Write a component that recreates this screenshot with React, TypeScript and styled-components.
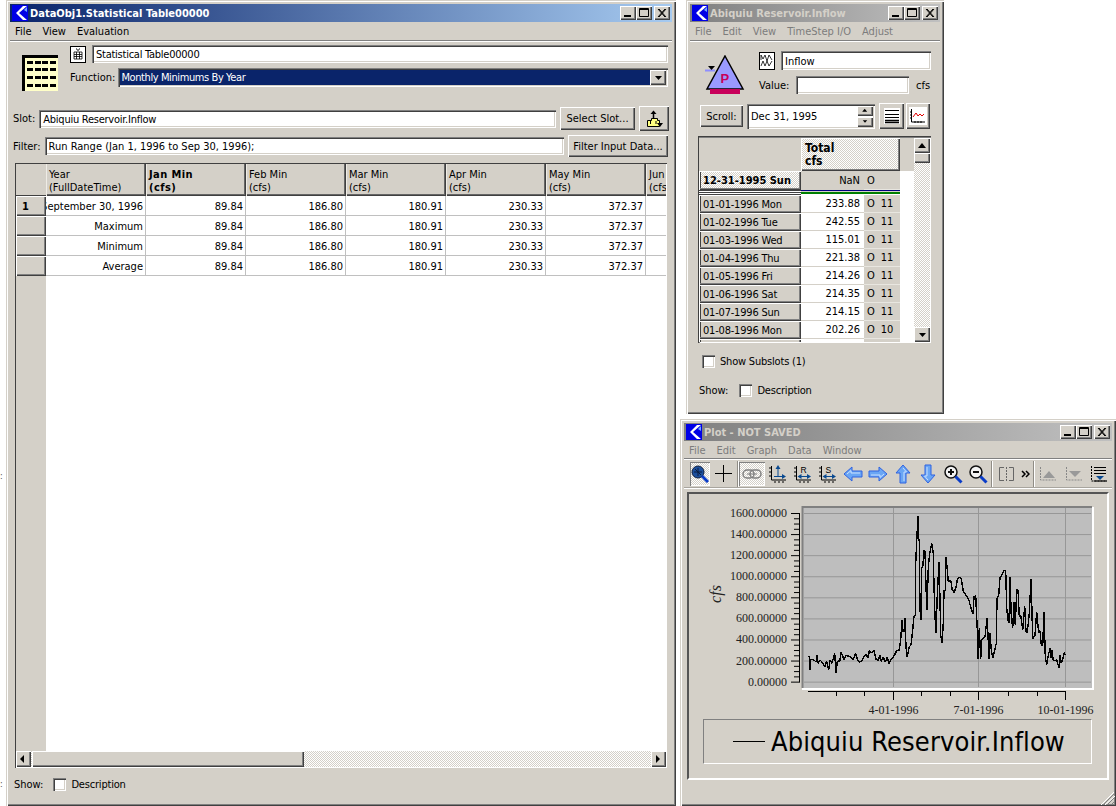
import React from 'react';
import styled, {createGlobalStyle, css} from 'styled-components';

const GlobalStyle = createGlobalStyle`
  html, body {
    margin: 0;
    padding: 0;
    background: #fff;
    width: 1116px;
    height: 806px;
    overflow: hidden;
  }
  body {
    font-family: "DejaVu Sans Condensed", "DejaVu Sans", sans-serif;
    font-size: 11px;
    color: #000;
  }
`

const face = '#d4d0c8'
const raised = css`
  background-color: ${face};
  box-shadow: inset 1px 1px #fff, inset -1px -1px #404040, inset -2px -2px #808080;
`
const sunken = css`
  background-color: #fff;
  box-shadow: inset 1px 1px #808080, inset 2px 2px #404040, inset -1px -1px #fff, inset -2px -2px ${face};
`
const dither = css`
  background: repeating-conic-gradient(${face} 0 25%, #fff 0 50%) 0 0 / 2px 2px;
`

const Desktop = styled.div`
  position: relative;
  width: 1116px;
  height: 806px;
  overflow: hidden;
`
const Stray = styled.span<{$y: number}>`
  position: absolute;
  left: 0;
  top: ${p => p.$y}px;
  line-height: 10px;
  font-size: 9px;
  color: #554;
`
const Win = styled.section<{$x: number; $y: number; $w: number; $h: number}>`
  position: absolute;
  left: ${p => p.$x}px;
  top: ${p => p.$y}px;
  width: ${p => p.$w}px;
  height: ${p => p.$h}px;
  box-sizing: border-box;
  padding: 4px;
  display: flex;
  flex-direction: column;
  background: ${face};
  box-shadow: inset 1px 1px ${face}, inset 2px 2px #fff, inset -1px -1px #404040, inset -2px -2px #808080;
`
const TitleBar = styled.header<{$active?: boolean}>`
  flex: none;
  height: 18px;
  display: flex;
  align-items: center;
  padding: 0 2px 0 2px;
  font-weight: bold;
  font-size: 11px;
  color: ${p => (p.$active ? '#fff' : face)};
  background: ${p => (p.$active ? 'linear-gradient(90deg, #0a246a, #a6caf0)' : 'linear-gradient(90deg, #808080, #c0c0c0)')};
`
const TitleText = styled.span`
  flex: 1;
  margin-left: 2px;
  white-space: nowrap;
`
const WinButtons = styled.div`
  display: flex;
`
const WinButton = styled.button`
  ${raised};
  width: 16px;
  height: 14px;
  border: 0;
  padding: 0;
  margin: 0;
  display: block;
  &:last-child {
    margin-left: 2px;
  }
  svg {
    display: block;
  }
`
const MenuBar = styled.nav<{$dim?: boolean; $short?: boolean}>`
  flex: none;
  height: ${p => (p.$short ? 15 : 17)}px;
  padding: ${p => (p.$short ? 2 : 1)}px 0 0 5px;
  display: flex;
  align-items: center;
  gap: 11px;
  color: ${p => (p.$dim ? '#7c7c7c' : '#000')};
  border-bottom: 1px solid #808080;
  box-shadow: 0 1px #fff;
  margin-bottom: ${p => (p.$short ? 1 : 2)}px;
  font-size: 11px;
`
const TextBox = styled.div<{$w?: number; $h?: number; $tight?: boolean}>`
  ${sunken};
  box-sizing: border-box;
  ${p => (p.$w ? `width: ${p.$w}px; flex: none;` : 'flex: 1;')}
  height: ${p => p.$h ?? 18}px;
  display: flex;
  align-items: center;
  padding: 1px 0 0 4px;
  white-space: nowrap;
  overflow: hidden;
  letter-spacing: ${p => (p.$tight ? '-0.25px' : 'normal')};
`
const PushButton = styled.button<{$w: number; $h: number}>`
  ${raised};
  border: 0;
  padding: 0;
  flex: none;
  width: ${p => p.$w}px;
  height: ${p => p.$h}px;
  font: inherit;
  color: #000;
  display: flex;
  align-items: center;
  justify-content: center;
`
const Check = styled.span`
  ${sunken};
  flex: none;
  display: block;
  width: 13px;
  height: 13px;
`
const Caption = styled.span`
  white-space: nowrap;
`

/* statistical table window */
const HeadRow = styled.div`
  display: flex;
  padding: 2px 4px 0 12px;
`
const BigIconBox = styled.div`
  flex: none;
  margin: 10px 12px 0 0;
  width: 36px;
  height: 36px;
`
const HeadCol = styled.div`
  flex: 1;
  display: flex;
  flex-direction: column;
  gap: 5px;
`
const NameRow = styled.div`
  display: flex;
  align-items: center;
  gap: 6px;
`
const FuncRow = styled.div`
  display: flex;
  align-items: center;
  gap: 3px;
`
const SelectBox = styled.div`
  ${sunken};
  flex: 1;
  height: 19px;
  box-sizing: border-box;
  padding: 2px;
  display: flex;
  align-items: stretch;
`
const SelectValue = styled.div`
  flex: 1;
  background: #0a246a;
  color: #fff;
  display: flex;
  align-items: center;
  padding-left: 1px;
  letter-spacing: -0.4px;
`
const SelectArrow = styled.div`
  ${raised};
  flex: none;
  width: 16px;
  display: flex;
  align-items: center;
  justify-content: center;
`
const FieldRow = styled.div<{$top: number; $right: number; $h: number}>`
  display: flex;
  align-items: center;
  height: ${p => p.$h}px;
  margin-top: ${p => p.$top}px;
  padding: 0 ${p => p.$right}px 0 3px;
  gap: 4px;
`
const TableFrame = styled.div`
  flex: 1;
  min-height: 0;
  margin: 6px 5px 0;
  box-sizing: border-box;
  padding: 1px;
  display: flex;
  flex-direction: column;
  background: #fff;
  box-shadow: inset 1px 1px #404040, inset -1px -1px #fff;
`
const TableBody = styled.div`
  flex: 1;
  min-height: 0;
  display: flex;
`
const RowHeads = styled.div`
  flex: none;
  width: 30px;
  background: ${face};
  display: flex;
  flex-direction: column;
`
const Corner = styled.div`
  height: 31px;
  border-bottom: 1px solid #404040;
`
const RowHead = styled.div`
  ${raised};
  height: 20px;
  box-sizing: border-box;
  padding-left: 6px;
  display: flex;
  align-items: center;
  font-weight: bold;
`
const Cells = styled.div`
  flex: 1;
  overflow: hidden;
  display: grid;
  grid-template-columns: repeat(7, 100px);
  grid-template-rows: 32px;
  grid-auto-rows: 20px;
  align-content: start;
`
const HeadCell = styled.div<{$bold?: boolean}>`
  background: ${face};
  box-shadow: inset 1px 0 #efece6, inset -1px -1px #404040, inset -2px -2px #666;
  box-sizing: border-box;
  padding: 4px 0 0 3px;
  line-height: 13px;
  white-space: pre;
  overflow: hidden;
  font-weight: ${p => (p.$bold ? 'bold' : 'normal')};
  letter-spacing: ${p => (p.$bold ? '0.4px' : 'normal')};
`
const DataCell = styled.div`
  box-sizing: border-box;
  border-right: 1px solid #c0c0c0;
  border-bottom: 1px solid #c0c0c0;
  padding: 2px 2px 0 0;
  display: flex;
  justify-content: flex-end;
  align-items: center;
  white-space: nowrap;
  overflow: hidden;
  background: #fff;
`
const HScroll = styled.div`
  ${dither};
  flex: none;
  height: 16px;
  display: flex;
  align-items: stretch;
  justify-content: space-between;
`
const ScrollBtn = styled.div`
  ${raised};
  flex: none;
  width: 15px;
  display: flex;
  align-items: center;
  justify-content: center;
`
const HThumb = styled.div`
  ${raised};
  flex: none;
  width: 272px;
  margin-left: 1px;
`
const HScrollLeft = styled.div`
  display: flex;
  align-items: stretch;
`
const ShowRow = styled.div<{$h: number; $left: number; $bottom?: number}>`
  flex: none;
  height: ${p => p.$h}px;
  display: flex;
  align-items: center;
  padding-left: ${p => p.$left}px;
  padding-bottom: ${p => p.$bottom ?? 0}px;
`
const ShowLabel = styled(Caption)<{$gap: number}>`
  margin-right: ${p => p.$gap}px;
`
const CheckText = styled(Caption)`
  margin-left: 5px;
  letter-spacing: -0.2px;
`

/* slot window */
const SlotHead = styled.div`
  display: flex;
  padding: 8px 9px 0 15px;
  height: 46px;
`
const ReservoirBox = styled.div`
  flex: none;
  margin-top: 4px;
  height: 40px;
`
const SlotFields = styled.div`
  flex: 1;
  margin-left: 14px;
  display: flex;
  flex-direction: column;
  gap: 6px;
`
const ValueRow = styled.div`
  display: flex;
  align-items: center;
`
const ValueLabel = styled(Caption)`
  width: 37px;
  flex: none;
`
const Unit = styled(Caption)`
  margin-left: 7px;
`
const ScrollRow = styled.div`
  display: flex;
  align-items: center;
  margin-top: 6px;
  padding-left: 10px;
  height: 26px;
`
const DateBox = styled.div`
  ${sunken};
  box-sizing: border-box;
  width: 128px;
  height: 25px;
  margin-left: 4px;
  display: flex;
  align-items: center;
  justify-content: space-between;
  padding: 0 2px 0 4px;
`
const Spin = styled.div`
  display: flex;
  flex-direction: column;
  gap: 1px;
`
const SpinBtn = styled.div`
  ${raised};
  width: 16px;
  height: 10px;
  display: flex;
  align-items: center;
  justify-content: center;
  svg {
    width: 6px;
    height: 5px;
  }
`
const ToolPair = styled.div`
  display: flex;
  gap: 2px;
  margin-left: 4px;
`
const SlotFrame = styled.div`
  flex: none;
  height: 207px;
  margin: 7px 9px 0 8px;
  box-sizing: border-box;
  padding: 2px 1px 1px 1px;
  display: flex;
  box-shadow: inset 1px 1px #404040, inset 2px 2px #808080, inset -1px -1px #fff;
  background: ${face};
`
const SlotGrid = styled.div`
  flex: 1;
  overflow: hidden;
  display: grid;
  grid-template-columns: 102px 63px 36px 14px;
  grid-template-rows: 33px 19px 5px;
  grid-auto-rows: 18px;
  align-content: start;
`
const BlankHead = styled.div`
  background: ${face};
`
const TotalHead = styled.div`
  ${dither};
  grid-column: span 2;
  box-shadow: inset 1px 1px #fff, inset -1px -1px #404040, inset -2px -2px #808080;
  box-sizing: border-box;
  padding: 4px 0 0 4px;
  line-height: 13px;
  font-weight: bold;
  font-size: 12px;
  white-space: pre;
`
const DateHead = styled.div<{$bold?: boolean}>`
  ${p => (p.$bold ? dither : `background: ${face};`)}
  box-shadow: inset 1px 1px #fff, inset -1px -1px #404040, inset -2px -2px #808080, inset 2px 0 #404040;
  box-sizing: border-box;
  padding-left: 4px;
  display: flex;
  align-items: center;
  font-weight: ${p => (p.$bold ? 'bold' : 'normal')};
  letter-spacing: ${p => (p.$bold ? 'normal' : '-0.2px')};
  white-space: nowrap;
`
const ValueCell = styled.div<{$nan?: boolean}>`
  background: ${p => (p.$nan ? face : '#fff')};
  border-bottom: 1px solid ${p => (p.$nan ? face : '#d4d0c8')};
  box-sizing: border-box;
  padding-right: 4px;
  display: flex;
  align-items: center;
  justify-content: flex-end;
`
const FlagCell = styled.div`
  background: ${face};
  border-bottom: 1px solid #e8e6e0;
  box-sizing: border-box;
  display: flex;
  align-items: center;
  gap: 6px;
  padding-left: 3px;
`
const Gutter = styled.div`
  background: #fff;
`
const GutterHead = styled.div`
  background: ${face};
`
const DividerLeft = styled.div`
  background: linear-gradient(#404040 0 1px, #fff 1px 2px, #404040 2px 3px, #fff 3px 4px, #404040 4px 5px);
`
const DividerRight = styled.div`
  background: linear-gradient(#00007f 0 1px, ${face} 1px 2px, #007f00 2px 4px, #fff 4px 5px);
`
const VScroll = styled.div`
  ${dither};
  flex: none;
  width: 16px;
  display: flex;
  flex-direction: column;
`
const VBtn = styled.div`
  ${raised};
  flex: none;
  height: 15px;
  display: flex;
  align-items: center;
  justify-content: center;
`
const VThumb = styled.div`
  ${raised};
  flex: none;
  height: 10px;
`
const VSpace = styled.div`
  flex: 1;
`

/* plot window */
const ToolBar = styled.div`
  flex: none;
  height: 27px;
  display: flex;
  align-items: center;
  padding-left: 6px;
  border-bottom: 1px solid #a8a59e;
  box-shadow: 0 1px #fff;
`
const Tool = styled.div<{$w: number; $on?: boolean}>`
  flex: none;
  width: ${p => p.$w}px;
  height: 24px;
  display: flex;
  align-items: center;
  justify-content: center;
  ${p =>
    p.$on
      ? css`
          ${dither};
          box-shadow: inset 1px 1px #808080, inset -1px -1px #fff;
        `
      : ''}
`
const ToolSep = styled.div`
  flex: none;
  width: 1px;
  height: 26px;
  margin: 0 1px;
  background: #8f8c85;
  box-shadow: 1px 0 #fff;
`
const PlotFrame = styled.div`
  flex: none;
  width: 422px;
  height: 288px;
  margin: 4px 0 0 3px;
  box-sizing: border-box;
  border: 2px solid;
  border-color: #555 #fff #fff #555;
  display: flex;
  flex-direction: column;
  svg {
    display: block;
    flex: none;
  }
`
const Legend = styled.div`
  flex: none;
  width: 389px;
  height: 45px;
  margin-left: 14px;
  box-sizing: border-box;
  border: 1px solid;
  border-color: #808080 #fff #fff #808080;
  display: flex;
  align-items: center;
  padding-left: 29px;
  gap: 6px;
`
const LegendLine = styled.span`
  flex: none;
  width: 32px;
  height: 1px;
  background: #000;
`
const LegendText = styled.span`
  font-size: 27px;
  letter-spacing: 0.1px;
  white-space: nowrap;
  color: #000;
`
const Grip = styled.svg`
  position: absolute;
  right: 1px;
  bottom: 1px;
`

const RiverIcon = () => (
  <svg width="16" height="16" viewBox="0 0 16 16">
    <rect width="16" height="16" fill="#0000e6" />
    <path d="M11 1h4L7 8l8 7h-4L4 8z" fill="#fff" />
    <path d="M12 5l3-3v5z" fill="#6fa8ff" />
  </svg>
)
const MinGlyph = () => (
  <svg width="16" height="14"><rect x="4" y="9" width="7" height="2" fill="#000" /></svg>
)
const MaxGlyph = () => (
  <svg width="16" height="14"><path d="M3.5 2.5h9v8h-9zM3 3.5h10" fill="none" stroke="#000" /></svg>
)
const CloseGlyph = () => (
  <svg width="16" height="14"><path d="M4 3l7 8M5 3l7 8M11 3l-7 8M12 3l-7 8" stroke="#000" /></svg>
)
const WinControls = () => (
  <WinButtons>
    <WinButton><MinGlyph /></WinButton>
    <WinButton><MaxGlyph /></WinButton>
    <WinButton><CloseGlyph /></WinButton>
  </WinButtons>
)
const Tri = ({dir}: {dir: 'up' | 'down' | 'left' | 'right'}) => {
  const points = {up: '0,6 8,6 4,1', down: '1,2 8,2 4.5,6', left: '5,0 5,8 1,4', right: '2,0 2,8 6,4'}[dir]
  return (
    <svg width="9" height="8" viewBox="0 0 9 8"><polygon points={points} fill="#000" /></svg>
  )
}

const BigTableIcon = () => {
  const dashes = []
  for (const y of [6, 13, 21, 29]) {
    for (const x of [5, 13, 20, 28]) dashes.push(<rect key={`${x}-${y}`} x={x} y={y} width="6" height="3" fill="#000" />)
  }
  return (
    <svg width="36" height="36">
      <rect width="36" height="36" fill="#ffffc8" />
      <rect width="36" height="3" fill="#000" />
      <rect width="3" height="36" fill="#000" />
      {dashes}
    </svg>
  )
}
const SmallTableIcon = () => (
  <svg width="16" height="17" style={{flex: 'none'}}>
    <rect x=".5" y=".5" width="15" height="16" fill="#fff" stroke="#000" />
    <path d="M4 6h8v7H4zM4 8.5h8M4 10.5h8M6.5 6v7M9.5 6v7" fill="none" stroke="#000" strokeWidth=".8" />
    <path d="M6 3h1M9 3h1M7 4h2" stroke="#000" />
  </svg>
)
const HandIcon = () => (
  <svg width="18" height="18" viewBox="0 0 18 18">
    <path d="M2.500 10.500h4v-2h6v2h2v6h-12z" fill="#ffff80" stroke="#000" />
    <path d="M8.500 9V3" stroke="#000" strokeWidth="1.500" />
    <path d="M5.500 4l3-3.500 3 3.500z" fill="#000" />
    <path d="M5.500 11v3M11 11v3" stroke="#000" />
    <path d="M12 13h6l-3 4z" fill="#000" />
  </svg>
)
const GageIcon = () => (
  <svg width="16" height="18" style={{flex: 'none'}}>
    <rect x=".5" y=".5" width="15" height="17" fill="#fff" stroke="#000" />
    <path d="M2 8V3l2 4 2-4 2 6 2-6 3 5M2 14l2-5 2 5 2-5 2 5 3-5" fill="none" stroke="#000" strokeWidth=".8" />
  </svg>
)
const ReservoirIcon = () => (
  <svg width="40" height="40" viewBox="0 0 40 40" style={{display: 'block'}}>
    <path d="M0 15.500h10" stroke="#8f8fff" strokeWidth="2" />
    <path d="M3 11h7l-3.500 4z" fill="#000" />
    <path d="M20 1L38 34H2z" fill="#9a9aff" stroke="#000" strokeWidth="1.500" />
    <rect x="5" y="34" width="30" height="5" fill="#c8005a" />
    <text x="15.500" y="28" fontFamily="Liberation Sans, sans-serif" fontWeight="bold" fontSize="13" fill="#c8005a">P</text>
  </svg>
)
const ListIcon = () => (
  <svg width="16" height="16">
    <rect width="16" height="16" fill="#fff" />
    <path d="M1 2.500h14M1 6.500h14M1 9.500h14" stroke="#000" />
    <path d="M1 12.500h14M1 14.500h14" stroke="#000" strokeWidth="1.500" />
  </svg>
)
const PlotIcon = () => (
  <svg width="18" height="18">
    <rect width="18" height="18" fill="#fff" />
    <path d="M2.500 2v13H16" fill="none" stroke="#000" />
    <path d="M1 5h2M1 8h2M1 11h2M6 14v2M9 14v2M12 14v2" stroke="#000" />
    <path d="M4 10l3-4 2 3 2-2 2 2 2-2" fill="none" stroke="#e00000" />
  </svg>
)

const Lens = ({mark}: {mark: 'plus' | 'minus'}) => (
  <svg width="20" height="20" viewBox="0 0 20 20">
    <circle cx="8" cy="8" r="6" fill="#f4f4f4" stroke="#111" strokeWidth="1.500" />
    <path d="M12.500 12.500l6 6" stroke="#0a3cc8" strokeWidth="3" />
    {mark === 'plus' && <path d="M5 8h6M8 5v6" stroke="#111" strokeWidth="2" />}
    {mark === 'minus' && <path d="M5 8h6" stroke="#111" strokeWidth="2" />}
  </svg>
)
const SearchIcon = () => (
  <svg width="18" height="18" viewBox="0 0 18 18">
    <circle cx="7" cy="7" r="6" fill="#1d4f9c" stroke="#102040" />
    <path d="M3 7h8M7 3v8M4 4l6 6" stroke="#0a1c40" />
    <path d="M11 11l6 6" stroke="#0a3cc8" strokeWidth="3" />
  </svg>
)
const CrossIcon = () => (
  <svg width="17" height="17"><path d="M0 8.500h17M8.500 0v17" stroke="#000" /></svg>
)
const ChainIcon = () => (
  <svg width="20" height="10">
    <rect x="1" y="1" width="11" height="8" rx="4" fill="none" stroke="#808080" strokeWidth="1.500" />
    <rect x="8" y="1" width="11" height="8" rx="4" fill="none" stroke="#808080" strokeWidth="1.500" />
    <path d="M5 5h10" stroke="#808080" />
  </svg>
)
const AxisIcon = ({letter, vertical}: {letter?: string; vertical?: boolean}) => (
  <svg width="18" height="18" viewBox="0 0 18 18">
    <path d="M2.500 1v14H17" fill="none" stroke="#000" />
    <path d="M0 3h2M0 7h2M0 11h2M6 16v2M10 16v2M14 16v2" stroke="#000" />
    {vertical ? (
      <>
        <path d="M9 2v10M5 11.500h11" stroke="#0a4a90" strokeWidth="1" />
        <path d="M9 0l2.500 4h-5zM17 11.500l-4-2.500v5z" fill="#0a4a90" />
      </>
    ) : (
      <>
        <path d="M5 11.500h11" stroke="#0a4a90" />
        <path d="M3.500 11.500l4-2.500v5zM17 11.500l-4-2.500v5z" fill="#0a4a90" />
        <text x="6.500" y="8" fontFamily="Liberation Sans, sans-serif" fontSize="8.500" fill="#000">{letter}</text>
      </>
    )}
  </svg>
)
const Arrow = ({rotate}: {rotate: number}) => (
  <svg width="20" height="20" viewBox="0 0 20 20" style={{transform: `rotate(${rotate}deg)`}}>
    <path d="M1 10l8-7v4h10v6H9v4z" fill="#6aa6f4" stroke="#2f62e0" strokeWidth="1" />
    <path d="M4 10l4-3.500V9h9" fill="none" stroke="#c9e0ff" />
  </svg>
)
const SplitIcon = () => (
  <svg width="15" height="14">
    <path d="M5 .5H.5v13H5M10 .5h4.500v13H10" fill="none" stroke="#666" />
    <path d="M7.500 0v14" stroke="#666" strokeDasharray="2 1" />
  </svg>
)
const ChevronsIcon = () => (
  <svg width="9" height="8"><path d="M1 1l3 3-3 3M5 1l3 3-3 3" fill="none" stroke="#000" strokeWidth="1.500" /></svg>
)
const PeakIcon = ({down}: {down?: boolean}) => (
  <svg width="16" height="14">
    <path d="M.5 0v13H16" fill="none" stroke="#888" strokeDasharray="2 1" />
    <polygon points={down ? '3,4 15,4 9,10' : '3,11 15,11 9,4'} fill="#999" />
  </svg>
)
const LinesIcon = () => (
  <svg width="16" height="16">
    <path d="M.5 0v15H16" fill="none" stroke="#000" strokeDasharray="2 1" />
    <path d="M3 1.500h12M3 4.500h12M3 7.500h12" stroke="#000" />
    <polygon points="5,10 13,10 9,14" fill="#0a4a90" />
    <path d="M3 15h13" stroke="#000" />
  </svg>
)

const statRows = [
  {year: 'September 30, 1996', head: '1'},
  {year: 'Maximum', head: ''},
  {year: 'Minimum', head: ''},
  {year: 'Average', head: ''},
]
const statValues = ['89.84', '186.80', '180.91', '230.33', '372.37', '']
const statHeads = [
  {text: 'Year\n(FullDateTime)'},
  {text: 'Jan Min\n(cfs)', bold: true},
  {text: 'Feb Min\n(cfs)'},
  {text: 'Mar Min\n(cfs)'},
  {text: 'Apr Min\n(cfs)'},
  {text: 'May Min\n(cfs)'},
  {text: 'Jun Min\n(cfs)'},
]

const slotRows = [
  ['01-01-1996 Mon', '233.88', '11'],
  ['01-02-1996 Tue', '242.55', '11'],
  ['01-03-1996 Wed', '115.01', '11'],
  ['01-04-1996 Thu', '221.38', '11'],
  ['01-05-1996 Fri', '214.26', '11'],
  ['01-06-1996 Sat', '214.35', '11'],
  ['01-07-1996 Sun', '214.15', '11'],
  ['01-08-1996 Mon', '202.26', '10'],
  ['', '', ''],
]

// traced from the plot, in 3x crop coordinates
const traceA = [[355,468],[358,470],[360,510],[362,478],[372,480],[378,486],[381,466],[384,490],[390,480],[396,486],[404,500],[410,484],[416,510],[420,480],[426,490],[434,460],[438,520],[442,484],[450,482],[452,455],[458,468],[462,480],[468,466],[480,470],[490,478],[497,460],[502,478],[508,486],[514,484],[522,470],[528,462],[534,474],[538,452],[544,458],[552,452],[558,478],[564,482],[570,466],[574,484],[580,472],[586,486],[592,472],[597,490]]
const traceB = [[4,478],[10,472],[20,452],[28,450],[32,420],[36,360],[38,395],[42,395],[45,355],[48,440],[51,472],[58,440],[63,435],[68,390],[72,348],[76,348],[77,190],[81,105],[84,48],[84,105],[88,125],[90,330],[93,360],[95,205],[99,195],[101,152],[105,155],[108,260],[111,330],[115,200],[119,160],[125,130],[130,160],[132,260],[135,350],[138,398],[142,285],[147,185],[150,300],[152,405],[156,430],[160,370],[162,272],[166,270],[168,170],[172,210],[175,245],[182,240],[187,270],[192,277],[197,265],[202,240],[207,232],[214,236],[220,275],[228,285],[236,298],[243,325],[249,343],[252,290],[257,287],[262,390],[264,478],[268,385],[272,478],[275,420],[285,410],[291,355],[294,405],[297,478],[300,400],[304,450],[308,475],[314,450],[319,430],[321,295],[326,285],[330,232],[336,225],[342,212],[347,212],[350,325],[354,360],[357,370],[360,230],[364,350],[368,385],[372,305],[376,375],[380,270],[384,270],[388,350],[392,345],[398,390],[404,318],[408,395],[412,397],[418,340],[423,238],[425,305],[428,417],[435,405],[440,335],[446,400],[450,392],[454,435],[458,437],[462,335],[466,470],[470,495],[474,470],[480,445],[483,475],[486,450],[490,482],[500,480],[503,490],[507,505],[510,465],[514,490],[518,478],[522,458],[527,465]]
const trace = [
  ...traceA.map(([x, y]) => `${(690 + x / 3).toFixed(1)},${(500 + y / 3).toFixed(1)}`),
  ...traceB.map(([x, y]) => `${(890 + x / 3).toFixed(1)},${(500 + y / 3).toFixed(1)}`),
].join(' ')

const yLabels = ['1600.00000', '1400.00000', '1200.00000', '1000.00000', '800.00000', '600.00000', '400.00000', '200.00000', '0.00000']
const yTop = 513.5
const yStep = 21.08
const xMajor = [893.5, 978.5, 1065.5]
const xMinor = [836.5, 864.5, 921.5, 950.5, 1008.5, 1037.5]
const serif = '"Liberation Serif", serif'

const Chart = () => (
  <svg width="418" height="225" viewBox="689 494 418 225">
    <rect x="803" y="508" width="290" height="180" fill="#bebebe" />
    {yLabels.map((_, i) => (
      <path key={i} d={`M804 ${yTop + i * yStep}H1091`} stroke="#979797" strokeWidth="1" />
    ))}
    {xMajor.map(x => (
      <path key={x} d={`M${x} 508V687`} stroke="#979797" strokeWidth="1" />
    ))}
    <path d="M802.500 688V507H1092" fill="none" stroke="#808080" strokeWidth="2" />
    <path d="M802 689H1093V507" fill="none" stroke="#fff" strokeWidth="2" />
    <polyline points={trace} fill="none" stroke="#000" strokeWidth="1.400" strokeLinejoin="bevel" shapeRendering="crispEdges" />
    <path d={`M799.500 ${yTop}V${yTop + 8 * yStep}`} stroke="#000" />
    {yLabels.map((label, i) => (
      <g key={label}>
        <path d={`M791 ${yTop + i * yStep}H800`} stroke="#000" />
        {i < 8 && [1, 2, 3].map(k => (
          <path key={k} d={`M794 ${yTop + (i + k / 4) * yStep}H800`} stroke="#000" />
        ))}
        <text x="787" y={yTop + i * yStep + 3.500} textAnchor="end" fontFamily={serif} fontSize="12" fill="#222">{label}</text>
      </g>
    ))}
    <text transform="translate(721 594) rotate(-90)" textAnchor="middle" fontFamily={serif} fontStyle="italic" fontSize="16" fill="#222">cfs</text>
    <path d="M808 691.500H1066" stroke="#000" />
    {xMinor.map(x => (
      <path key={x} d={`M${x} 692V696`} stroke="#000" />
    ))}
    {xMajor.map((x, i) => (
      <g key={x}>
        <path d={`M${x} 692V700`} stroke="#000" />
        <text x={x} y="714" textAnchor="middle" fontFamily={serif} fontSize="12" fill="#222">{['4-01-1996', '7-01-1996', '10-01-1996'][i]}</text>
      </g>
    ))}
  </svg>
)

const StatWindow = () => (
  <Win $x={6} $y={0} $w={670} $h={806}>
    <TitleBar $active>
      <RiverIcon />
      <TitleText>DataObj1.Statistical Table00000</TitleText>
      <WinControls />
    </TitleBar>
    <MenuBar>
      <Caption>File</Caption>
      <Caption>View</Caption>
      <Caption>Evaluation</Caption>
    </MenuBar>
    <HeadRow>
      <BigIconBox><BigTableIcon /></BigIconBox>
      <HeadCol>
        <NameRow>
          <SmallTableIcon />
          <TextBox $tight>Statistical Table00000</TextBox>
        </NameRow>
        <FuncRow>
          <Caption>Function:</Caption>
          <SelectBox>
            <SelectValue>Monthly Minimums By Year</SelectValue>
            <SelectArrow><Tri dir="down" /></SelectArrow>
          </SelectBox>
        </FuncRow>
      </HeadCol>
    </HeadRow>
    <FieldRow $top={15} $right={3} $h={25}>
      <Caption>Slot:</Caption>
      <TextBox $tight>Abiquiu Reservoir.Inflow</TextBox>
      <PushButton $w={75} $h={23}>Select Slot...</PushButton>
      <PushButton $w={30} $h={25}><HandIcon /></PushButton>
    </FieldRow>
    <FieldRow $top={4} $right={4} $h={22}>
      <Caption>Filter:</Caption>
      <TextBox>Run Range (Jan 1, 1996 to Sep 30, 1996);</TextBox>
      <PushButton $w={100} $h={22}>Filter Input Data...</PushButton>
    </FieldRow>
    <TableFrame>
      <TableBody>
        <RowHeads>
          <Corner />
          {statRows.map((r, i) => (
            <RowHead key={i}>{r.head}</RowHead>
          ))}
        </RowHeads>
        <Cells>
          {statHeads.map(h => (
            <HeadCell key={h.text} $bold={h.bold}>{h.text}</HeadCell>
          ))}
          {statRows.map(r => (
            <React.Fragment key={r.year}>
              <DataCell>{r.year}</DataCell>
              {statValues.map((v, i) => (
                <DataCell key={i}>{v}</DataCell>
              ))}
            </React.Fragment>
          ))}
        </Cells>
      </TableBody>
      <HScroll>
        <HScrollLeft>
          <ScrollBtn><Tri dir="left" /></ScrollBtn>
          <HThumb />
        </HScrollLeft>
        <ScrollBtn><Tri dir="right" /></ScrollBtn>
      </HScroll>
    </TableFrame>
    <ShowRow $h={32} $bottom={2} $left={4}>
      <ShowLabel $gap={10}>Show:</ShowLabel>
      <Check />
      <CheckText>Description</CheckText>
    </ShowRow>
  </Win>
)

const SlotWindow = () => (
  <Win $x={686} $y={0} $w={258} $h={414}>
    <TitleBar>
      <RiverIcon />
      <TitleText>Abiquiu Reservoir.Inflow</TitleText>
      <WinControls />
    </TitleBar>
    <MenuBar $dim>
      <Caption>File</Caption>
      <Caption>Edit</Caption>
      <Caption>View</Caption>
      <Caption>TimeStep I/O</Caption>
      <Caption>Adjust</Caption>
    </MenuBar>
    <SlotHead>
      <ReservoirBox><ReservoirIcon /></ReservoirBox>
      <SlotFields>
        <NameRow>
          <GageIcon />
          <TextBox $h={19}>Inflow</TextBox>
        </NameRow>
        <ValueRow>
          <ValueLabel>Value:</ValueLabel>
          <TextBox $w={113} $h={18} />
          <Unit>cfs</Unit>
        </ValueRow>
      </SlotFields>
    </SlotHead>
    <ScrollRow>
      <PushButton $w={43} $h={22}>Scroll:</PushButton>
      <DateBox>
        Dec 31, 1995
        <Spin>
          <SpinBtn><Tri dir="up" /></SpinBtn>
          <SpinBtn><Tri dir="down" /></SpinBtn>
        </Spin>
      </DateBox>
      <ToolPair>
        <PushButton $w={25} $h={26}><ListIcon /></PushButton>
        <PushButton $w={24} $h={26}><PlotIcon /></PushButton>
      </ToolPair>
    </ScrollRow>
    <SlotFrame>
      <SlotGrid>
        <BlankHead />
        <TotalHead>{'Total\ncfs'}</TotalHead>
        <GutterHead />
        <DateHead $bold>12-31-1995 Sun</DateHead>
        <ValueCell $nan>NaN</ValueCell>
        <FlagCell>O</FlagCell>
        <Gutter />
        <DividerLeft />
        <DividerRight />
        <DividerRight />
        <Gutter />
        {slotRows.map(([date, value, num], i) => (
          <React.Fragment key={i}>
            <DateHead>{date}</DateHead>
            <ValueCell>{value}</ValueCell>
            <FlagCell>
              {value && <span>O</span>}
              <span>{num}</span>
            </FlagCell>
            <Gutter />
          </React.Fragment>
        ))}
      </SlotGrid>
      <VScroll>
        <VBtn><Tri dir="up" /></VBtn>
        <VThumb />
        <VSpace />
        <VBtn><Tri dir="down" /></VBtn>
      </VScroll>
    </SlotFrame>
    <ShowRow $h={36} $left={12}>
      <Check />
      <CheckText>Show Subslots (1)</CheckText>
    </ShowRow>
    <ShowRow $h={22} $left={9}>
      <ShowLabel $gap={11}>Show:</ShowLabel>
      <Check />
      <CheckText>Description</CheckText>
    </ShowRow>
  </Win>
)

const PlotWindow = () => (
  <Win $x={680} $y={419} $w={436} $h={387}>
    <TitleBar>
      <RiverIcon />
      <TitleText>Plot - NOT SAVED</TitleText>
      <WinControls />
    </TitleBar>
    <MenuBar $dim $short>
      <Caption>File</Caption>
      <Caption>Edit</Caption>
      <Caption>Graph</Caption>
      <Caption>Data</Caption>
      <Caption>Window</Caption>
    </MenuBar>
    <ToolBar>
      <Tool $w={20} $on><SearchIcon /></Tool>
      <Tool $w={26}><CrossIcon /></Tool>
      <ToolSep />
      <Tool $w={26} $on><ChainIcon /></Tool>
      <Tool $w={25}><AxisIcon vertical /></Tool>
      <Tool $w={25}><AxisIcon letter="R" /></Tool>
      <Tool $w={25}><AxisIcon letter="S" /></Tool>
      <Tool $w={25}><Arrow rotate={0} /></Tool>
      <Tool $w={25}><Arrow rotate={180} /></Tool>
      <Tool $w={25}><Arrow rotate={90} /></Tool>
      <Tool $w={25}><Arrow rotate={-90} /></Tool>
      <Tool $w={25}><Lens mark="plus" /></Tool>
      <Tool $w={25}><Lens mark="minus" /></Tool>
      <ToolSep />
      <Tool $w={26}><SplitIcon /></Tool>
      <Tool $w={13}><ChevronsIcon /></Tool>
      <ToolSep />
      <Tool $w={26}><PeakIcon /></Tool>
      <Tool $w={25}><PeakIcon down /></Tool>
      <Tool $w={25}><LinesIcon /></Tool>
    </ToolBar>
    <PlotFrame>
      <Chart />
      <Legend>
        <LegendLine />
        <LegendText>Abiquiu Reservoir.Inflow</LegendText>
      </Legend>
    </PlotFrame>
    <Grip width="15" height="13" viewBox="0 0 15 13">
      <path d="M3 13L15 1M7 13l8-8M11 13l4-4" stroke="#808080" strokeWidth="1" />
      <path d="M1 13L14 0M5 13l10-9" stroke="#fff" strokeWidth="1" />
    </Grip>
  </Win>
)

export default function App() {
  return (
    <>
      <GlobalStyle />
      <Desktop>
        <Stray $y={471}>:</Stray>
        <Stray $y={779}>:</Stray>
        <StatWindow />
        <SlotWindow />
        <PlotWindow />
      </Desktop>
    </>
  )
}
